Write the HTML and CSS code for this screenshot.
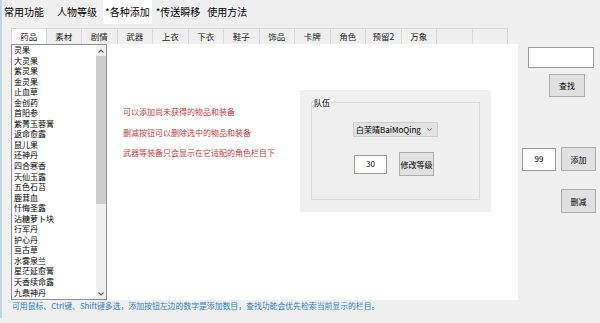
FILE: index.html
```html
<!DOCTYPE html>
<html lang="zh">
<head>
  <meta charset="UTF-8">
  <title>各种添加</title>
  <link rel="stylesheet" href="styles.css">
</head>
<body>

<div class="window">

  <!-- 顶部标签 -->
  <div class="top-tabs">
    <div class="top-tab">常用功能</div>
    <div class="top-tab">人物等级</div>
    <div class="top-tab active">*各种添加</div>
    <div class="top-tab">*传送瞬移</div>
    <div class="top-tab">使用方法</div>
  </div>

  <!-- 分类标签 -->
  <div class="cat-tabs">
    <div class="cat-tab active">药品</div>
    <div class="cat-tab">素材</div>
    <div class="cat-tab">剧情</div>
    <div class="cat-tab">武器</div>
    <div class="cat-tab">上衣</div>
    <div class="cat-tab">下衣</div>
    <div class="cat-tab">鞋子</div>
    <div class="cat-tab">饰品</div>
    <div class="cat-tab">卡牌</div>
    <div class="cat-tab">角色</div>
    <div class="cat-tab">预留2</div>
    <div class="cat-tab">万象</div>
    <div class="cat-tab"></div>
    <div class="cat-tab"></div>
  </div>

  <div class="main">

    <!-- 物品列表 -->
    <div class="item-list">
      <ul class="items">
        <li>灵果</li>
        <li>大灵果</li>
        <li>紫灵果</li>
        <li>金灵果</li>
        <li>止血草</li>
        <li>金创药</li>
        <li>首阳参</li>
        <li>紫菁玉蓉膏</li>
        <li>返命愈露</li>
        <li>鼠儿果</li>
        <li>还神丹</li>
        <li>四合寒香</li>
        <li>天仙玉露</li>
        <li>五色石苔</li>
        <li>鹿茸血</li>
        <li>忏悔圣露</li>
        <li>沾糖萝卜块</li>
        <li>行军丹</li>
        <li>护心丹</li>
        <li>亘古草</li>
        <li>水雾泉兰</li>
        <li>星茫延愈膏</li>
        <li>天香续命露</li>
        <li>九鼎神丹</li>
      </ul>
      <div class="scrollbar">
        <svg class="arrow" width="8" height="6" viewBox="0 0 8 6"><path d="M1.5 4.5 L4 2 L6.5 4.5" fill="none" stroke="#606060" stroke-width="1.2"/></svg>
        <div class="thumb"></div>
        <div class="track"></div>
        <svg class="arrow" width="8" height="6" viewBox="0 0 8 6"><path d="M1.5 1.5 L4 4 L6.5 1.5" fill="none" stroke="#606060" stroke-width="1.2"/></svg>
      </div>
    </div>

    <!-- 说明与队伍 -->
    <div class="panel">
      <div class="notes">
        <p>可以添加尚未获得的物品和装备</p>
        <p>删减按钮可以删除选中的物品和装备</p>
        <p>武器等装备只会显示在它适配的角色栏目下</p>
      </div>
      <div class="team-box">
        <div class="group">
          <span class="group-label">队伍</span>
          <div class="combo">
            <span>白茉晴BaiMoQing</span>
            <svg width="7" height="5" viewBox="0 0 7 5"><path d="M1 1.2 L3.5 3.6 L6 1.2" fill="none" stroke="#777" stroke-width="0.9"/></svg>
          </div>
          <div class="level-row">
            <input class="level-input" type="text" value="30">
            <button class="btn level-btn">修改等级</button>
          </div>
        </div>
      </div>
    </div>

    <!-- 右侧操作 -->
    <div class="side">
      <input class="search-input" type="text">
      <button class="btn find-btn">查找</button>
      <div class="add-row">
        <input class="count-input" type="text" value="99">
        <button class="btn">添加</button>
      </div>
      <button class="btn del-btn">删减</button>
    </div>

  </div>

  <div class="hint">可用鼠标、Ctrl键、Shift键多选，添加按钮左边的数字是添加数目，查找功能会优先检索当前显示的栏目。</div>

</div>

</body>
</html>
```

FILE: styles.css
```css
* {
  box-sizing: border-box;
}

body {
  margin: 0;
  background: #f0f0f0;
  font-family: "Noto Sans CJK SC", "Noto Sans", sans-serif;
  color: #000;
}

.window {
  width: 600px;
  height: 318px;
  border-left: 2px solid #bcd6ee;
  overflow: hidden;
}

/* 顶部标签 */
.top-tabs {
  display: flex;
  height: 24px;
  margin-bottom: 4px;
}

.top-tab {
  padding: 0 4px 0 3px;
  font-size: 10px;
  line-height: 24px;
  white-space: nowrap;
}

.top-tab:first-child {
  padding-left: 2px;
  margin-right: 6px;
}

.top-tab.active {
  background: #fff;
  padding: 0 2px;
  margin: 0 1px 0 2px;
}

/* 分类标签 */
.cat-tabs {
  display: flex;
  margin-left: 9px;
  height: 16px;
}

.cat-tab {
  width: 35.5px;
  border-top: 1px solid #dadada;
  border-right: 1px solid #dadada;
  font-size: 8.5px;
  line-height: 15px;
  text-align: center;
  color: #222;
}

.cat-tab:first-child {
  border-left: 1px solid #dadada;
}

.cat-tab.active {
  background: #fff;
}

.main {
  display: flex;
  height: 256px;
}

/* 物品列表 */
.item-list {
  display: flex;
  width: 96px;
  margin-left: 9px;
  background: #fff;
  border: 1px solid #8f8f8f;
}

.items {
  flex: 1;
  margin: 0;
  padding: 0 0 0 2px;
  list-style: none;
  font-size: 8px;
  line-height: 10.55px;
  white-space: nowrap;
  overflow: hidden;
}

.scrollbar {
  width: 10px;
  display: flex;
  flex-direction: column;
  align-items: center;
  background: #f0f0f0;
}

.arrow {
  margin: 3px 0 2px;
}

.thumb {
  width: 100%;
  height: 148px;
  background: #cdcdcd;
}

.track {
  flex: 1;
}

/* 说明 */
.panel {
  display: flex;
  width: 411px;
  background: #fff;
}

.notes {
  width: 193px;
  padding: 62px 0 0 16px;
}

.notes p {
  margin: 0 0 9.5px;
  font-size: 8px;
  line-height: 11px;
  color: #c8393b;
  white-space: nowrap;
}

.team-box {
  width: 191px;
  height: 122px;
  margin-top: 46px;
  padding: 12px 11px;
  background: #f0f0f0;
}

.group {
  position: relative;
  height: 98px;
  border: 1px solid #dcdcdc;
  padding: 19px 0 0 41px;
}

.group-label {
  position: absolute;
  top: -6px;
  left: 1px;
  padding: 0 1px;
  background: #f0f0f0;
  font-size: 8px;
  line-height: 11px;
}

.combo {
  display: flex;
  align-items: center;
  justify-content: space-between;
  width: 85px;
  height: 15px;
  padding: 0 4px 0 2px;
  background: #e3e3e3;
  border: 1px solid #cfcfcf;
  font-size: 8px;
}

.level-row {
  display: flex;
  align-items: center;
  gap: 12px;
  margin: 15px 0 0 1px;
}

.level-input {
  width: 33px;
  height: 19px;
}

.level-btn {
  width: 40px;
  height: 22px;
}

/* 右侧 */
.side {
  display: flex;
  flex-direction: column;
  align-items: flex-start;
  width: 82px;
  padding-top: 3px;
}

input {
  margin: 0;
  padding: 0 0 2px;
  background: #fff;
  border: 1px solid #9a9a9a;
  font-family: inherit;
  font-size: 8px;
  text-align: center;
}

.btn {
  margin: 0;
  padding: 0;
  width: 35px;
  height: 24px;
  background: #e1e1e1;
  border: 1px solid #adadad;
  font-family: inherit;
  font-size: 8px;
  color: #000;
}

.search-input {
  width: 66px;
  height: 21px;
  margin-left: 10px;
}

.find-btn {
  width: 36px;
  height: 23px;
  margin: 6px 0 0 31px;
}

.add-row {
  display: flex;
  align-items: center;
  gap: 5px;
  margin: 50px 0 0 4px;
}

.count-input {
  width: 34px;
  height: 23px;
}

.del-btn {
  margin: 18px 0 0 43px;
}

.hint {
  padding-left: 10px;
  font-size: 7.85px;
  line-height: 12px;
  color: #2a7fd0;
  white-space: nowrap;
}
```
